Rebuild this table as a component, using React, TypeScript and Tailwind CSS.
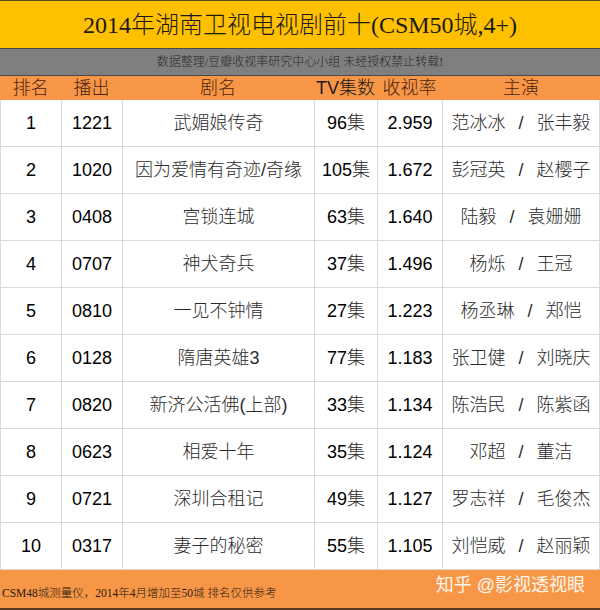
import React from "react";

const rows = [
  ["1", "1221", "武媚娘传奇", "96", "2.959", "范冰冰", "张丰毅"],
  ["2", "1020", "因为爱情有奇迹/奇缘", "105", "1.672", "彭冠英", "赵樱子"],
  ["3", "0408", "宫锁连城", "63", "1.640", "陆毅", "袁姗姗"],
  ["4", "0707", "神犬奇兵", "37", "1.496", "杨烁", "王冠"],
  ["5", "0810", "一见不钟情", "27", "1.223", "杨丞琳", "郑恺"],
  ["6", "0128", "隋唐英雄3", "77", "1.183", "张卫健", "刘晓庆"],
  ["7", "0820", "新济公活佛(上部)", "33", "1.134", "陈浩民", "陈紫函"],
  ["8", "0623", "相爱十年", "35", "1.124", "邓超", "董洁"],
  ["9", "0721", "深圳合租记", "49", "1.127", "罗志祥", "毛俊杰"],
  ["10", "0317", "妻子的秘密", "55", "1.105", "刘恺威", "赵丽颖"],
];

const serif = "font-['Liberation_Serif','Noto_Sans_CJK_SC',serif]";
const sans = "font-['Liberation_Sans','Noto_Sans_CJK_SC',sans-serif]";
const cols = "grid grid-cols-[61px_61px_192px_63px_65px_158px]";
const cell = "h-full flex items-center justify-center border-l border-[#d9d9d9]";

export default function App() {
  return (
    <div className={`w-[600px] h-[610px] bg-white flex flex-col ${sans}`}>
      {/* title */}
      <div className={`h-[48px] bg-[#ffc000] border-t border-[#5a4a20] flex items-center justify-center text-[24px] font-light text-[#1a1a1a] ${serif}`}>
        2014年湖南卫视电视剧前十(CSM50城,4+)
      </div>
      <div className={`h-[28px] bg-[#7f7f7f] border-t border-b border-[#4a4a4a] flex items-center justify-center text-[12px] font-light text-[#2a2a2a] ${serif}`}>
        数据整理/豆瓣收视率研究中心小组 未经授权禁止转载!
      </div>
      {/* header */}
      <div className={`${cols} h-[24px] bg-[#f79646] text-[18px] leading-[24px] font-light text-[#4a2410] text-center`}>
        <div>排名</div>
        <div>播出</div>
        <div>剧名</div>
        <div className="text-[#1a1a1a]">TV集数</div>
        <div>收视率</div>
        <div>主演</div>
      </div>
      {/* rows */}
      <div className="flex flex-col">
        {rows.map((r) => (
          <div key={r[0]} className={`${cols} h-[47px] border-b border-[#d9d9d9] text-[18px] text-center`}>
            <div className={`${cell} text-black`}>{r[0]}</div>
            <div className={`${cell} text-black`}>{r[1]}</div>
            <div className={`${cell} font-light text-[#2b2b2b] whitespace-nowrap`}>{r[2]}</div>
            <div className={`${cell} text-black`}>
              {r[3]}
              <span className="font-light text-[#2b2b2b]">集</span>
            </div>
            <div className={`${cell} text-black`}>{r[4]}</div>
            <div className={`${cell} gap-[13px] border-r font-light text-[#2b2b2b]`}>
              <span>{r[5]}</span>
              <span>/</span>
              <span>{r[6]}</span>
            </div>
          </div>
        ))}
      </div>
      {/* footer */}
      <div className="flex-1 bg-[#f79646] border-b-2 border-[#5a3a20] flex items-center justify-between pl-[2px] pr-[15px]">
        <span className={`text-[11.5px] font-light text-[#2a1a10] mt-[10px] ${serif}`}>
          CSM48城测量仪，2014年4月增加至50城 排名仅供参考
        </span>
        <span className="text-[18px] text-white/90 -mt-[8px]">知乎 @影视透视眼</span>
      </div>
    </div>
  );
}
